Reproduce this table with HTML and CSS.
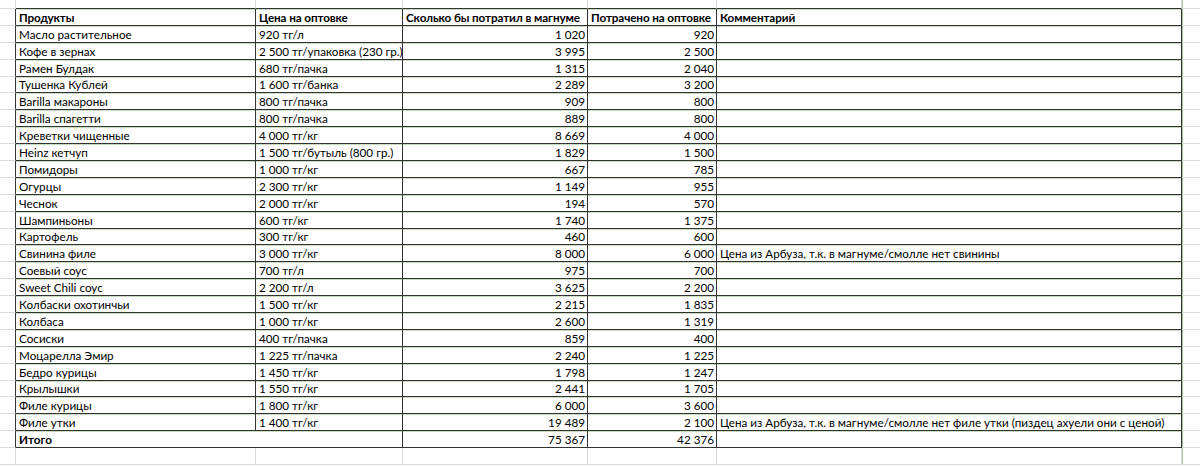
FILE: index.html
```html
<!DOCTYPE html>
<html lang="ru">
<head>
<meta charset="utf-8">
<title>Продукты</title>
<link rel="stylesheet" href="styles.css">
</head>
<body>
<table class="sheet">
<colgroup><col class="w-gl"><col class="w-a"><col class="w-b"><col class="w-c"><col class="w-d"><col class="w-e"><col class="w-gr"></colgroup>
<tr class="top"><td class="g gl"></td><td class="g gt"></td><td class="g gt"></td><td class="g gt"></td><td class="g gt"></td><td class="g gt"></td><td class="g gr"></td></tr>
<tr class="row head"><td class="g gl edge"></td><td>Продукты</td><td>Цена на оптовке</td><td>Сколько бы потратил в магнуме</td><td>Потрачено на оптовке</td><td>Комментарий</td><td class="g gr"></td></tr>
<tr class="row"><td class="g gl edge"></td><td>Масло растительное</td><td>920 тг/л</td><td class="n">1 020</td><td class="n">920</td><td></td><td class="g gr"></td></tr>
<tr class="row"><td class="g gl edge"></td><td>Кофе в зернах</td><td>2 500 тг/упаковка (230 гр.)</td><td class="n">3 995</td><td class="n">2 500</td><td></td><td class="g gr"></td></tr>
<tr class="row"><td class="g gl edge"></td><td>Рамен Булдак</td><td>680 тг/пачка</td><td class="n">1 315</td><td class="n">2 040</td><td></td><td class="g gr"></td></tr>
<tr class="row"><td class="g gl edge"></td><td>Тушенка Кублей</td><td>1 600 тг/банка</td><td class="n">2 289</td><td class="n">3 200</td><td></td><td class="g gr"></td></tr>
<tr class="row"><td class="g gl edge"></td><td>Barilla макароны</td><td>800 тг/пачка</td><td class="n">909</td><td class="n">800</td><td></td><td class="g gr"></td></tr>
<tr class="row"><td class="g gl edge"></td><td>Barilla спагетти</td><td>800 тг/пачка</td><td class="n">889</td><td class="n">800</td><td></td><td class="g gr"></td></tr>
<tr class="row"><td class="g gl edge"></td><td>Креветки чищенные</td><td>4 000 тг/кг</td><td class="n">8 669</td><td class="n">4 000</td><td></td><td class="g gr"></td></tr>
<tr class="row"><td class="g gl edge"></td><td>Heinz кетчуп</td><td>1 500 тг/бутыль (800 гр.)</td><td class="n">1 829</td><td class="n">1 500</td><td></td><td class="g gr"></td></tr>
<tr class="row"><td class="g gl edge"></td><td>Помидоры</td><td>1 000 тг/кг</td><td class="n">667</td><td class="n">785</td><td></td><td class="g gr"></td></tr>
<tr class="row"><td class="g gl edge"></td><td>Огурцы</td><td>2 300 тг/кг</td><td class="n">1 149</td><td class="n">955</td><td></td><td class="g gr"></td></tr>
<tr class="row"><td class="g gl edge"></td><td>Чеснок</td><td>2 000 тг/кг</td><td class="n">194</td><td class="n">570</td><td></td><td class="g gr"></td></tr>
<tr class="row"><td class="g gl edge"></td><td>Шампиньоны</td><td>600 тг/кг</td><td class="n">1 740</td><td class="n">1 375</td><td></td><td class="g gr"></td></tr>
<tr class="row"><td class="g gl edge"></td><td>Картофель</td><td>300 тг/кг</td><td class="n">460</td><td class="n">600</td><td></td><td class="g gr"></td></tr>
<tr class="row"><td class="g gl edge"></td><td>Свинина филе</td><td>3 000 тг/кг</td><td class="n">8 000</td><td class="n">6 000</td><td>Цена из Арбуза, т.к. в магнуме/смолле нет свинины</td><td class="g gr"></td></tr>
<tr class="row"><td class="g gl edge"></td><td>Соевый соус</td><td>700 тг/л</td><td class="n">975</td><td class="n">700</td><td></td><td class="g gr"></td></tr>
<tr class="row"><td class="g gl edge"></td><td>Sweet Chili соус</td><td>2 200 тг/л</td><td class="n">3 625</td><td class="n">2 200</td><td></td><td class="g gr"></td></tr>
<tr class="row"><td class="g gl edge"></td><td>Колбаски охотинчьи</td><td>1 500 тг/кг</td><td class="n">2 215</td><td class="n">1 835</td><td></td><td class="g gr"></td></tr>
<tr class="row"><td class="g gl edge"></td><td>Колбаса</td><td>1 000 тг/кг</td><td class="n">2 600</td><td class="n">1 319</td><td></td><td class="g gr"></td></tr>
<tr class="row"><td class="g gl edge"></td><td>Сосиски</td><td>400 тг/пачка</td><td class="n">859</td><td class="n">400</td><td></td><td class="g gr"></td></tr>
<tr class="row"><td class="g gl edge"></td><td>Моцарелла Эмир</td><td>1 225 тг/пачка</td><td class="n">2 240</td><td class="n">1 225</td><td></td><td class="g gr"></td></tr>
<tr class="row"><td class="g gl edge"></td><td>Бедро курицы</td><td>1 450 тг/кг</td><td class="n">1 798</td><td class="n">1 247</td><td></td><td class="g gr"></td></tr>
<tr class="row"><td class="g gl edge"></td><td>Крылышки</td><td>1 550 тг/кг</td><td class="n">2 441</td><td class="n">1 705</td><td></td><td class="g gr"></td></tr>
<tr class="row"><td class="g gl edge"></td><td>Филе курицы</td><td>1 800 тг/кг</td><td class="n">6 000</td><td class="n">3 600</td><td></td><td class="g gr"></td></tr>
<tr class="row"><td class="g gl edge"></td><td>Филе утки</td><td>1 400 тг/кг</td><td class="n">19 489</td><td class="n">2 100</td><td>Цена из Арбуза, т.к. в магнуме/смолле нет филе утки (пиздец ахуели они с ценой)</td><td class="g gr"></td></tr>
<tr class="row total"><td class="g gl edge"></td><td class="merge">Итого</td><td></td><td class="n">75 367</td><td class="n">42 376</td><td></td><td class="g gr"></td></tr>
<tr class="below"><td class="g gl"></td><td class="g"></td><td class="g"></td><td class="g"></td><td class="g"></td><td class="g"></td><td class="g gr"></td></tr>
</table>
</body>
</html>
```

FILE: styles.css
```css
html, body {
  margin: 0;
  padding: 0;
  background: #ffffff;
  overflow: hidden;
}

.sheet {
  border-collapse: separate;
  border-spacing: 0;
  table-layout: fixed;
  width: 1200px;
  font-family: Lato, "Open Sans", sans-serif;
  font-size: 11.7px;
  color: #000;
}

.w-gl { width: 16px; }
.w-a { width: 240px; }
.w-b { width: 147px; }
.w-c { width: 185px; }
.w-d { width: 129px; }
.w-e { width: 465px; }
.w-gr { width: 18px; }

.sheet td {
  padding: 0 2px 0 3px;
  border-right: 1px solid #333;
  border-bottom: 1px solid #333;
  white-space: nowrap;
  overflow: visible;
  vertical-align: bottom;
  line-height: 15px;
  text-align: left;
}

.sheet .top td { height: 8px; }
.sheet .row { height: 16.9px; }
.sheet .below { height: 17px; }

.sheet td.g {
  border-right: 1px solid #dadada;
  border-bottom: 1px solid #dadada;
  padding: 0;
}

.sheet td.gt {
  border-bottom-color: #333;
}

.sheet td.edge {
  border-right-color: #333;
}

.sheet td.gr {
  border-right: none;
  box-shadow: inset 1px 0 0 #a9c79c;
}

.sheet .row td:not(.g) {
  box-shadow: inset 0 1px 0 #c9dcc0;
}

.head td {
  font-weight: bold;
  letter-spacing: -0.1px;
}

.sheet td.n {
  text-align: right;
  padding-right: 2px;
}

.total .merge {
  font-weight: bold;
  border-right: none;
}
```
